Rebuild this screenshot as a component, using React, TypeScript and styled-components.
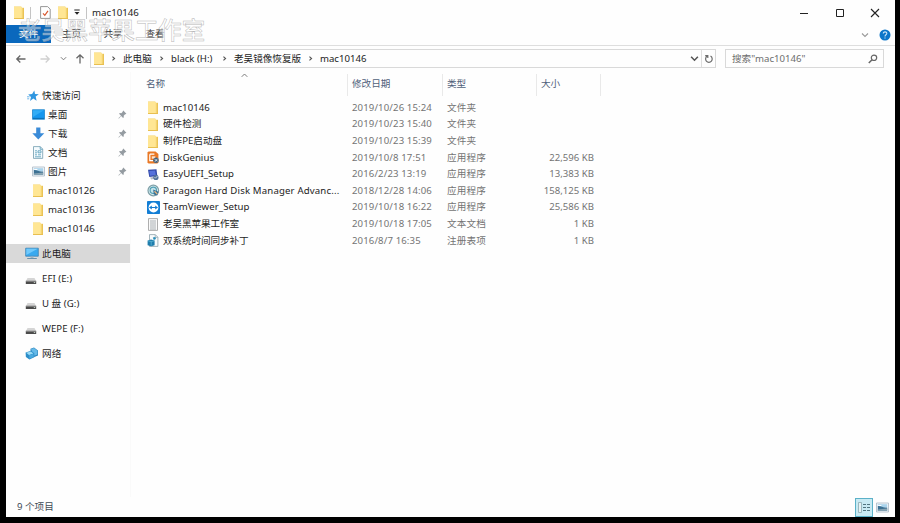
import React from 'react';
import styled, { createGlobalStyle } from 'styled-components';

const Global = createGlobalStyle`
  * { box-sizing: border-box; }
  body {
    margin: 0;
    background: #000;
    font-family: "Noto Sans", "Noto Sans CJK SC", sans-serif;
    font-size: 9.6px;
    line-height: 14px;
    color: #1c1c1c;
    overflow: hidden;
  }
  svg { display: block; flex: none; }
`;

const Screen = styled.div`
  height: 523px;
  padding: 0 5px 6px 6px;
  background: #000;
`;

const Window = styled.div`
  position: relative;
  height: 517px;
  background: #fefefe;
  display: flex;
  flex-direction: column;
  white-space: nowrap;
`;

const TitleBar = styled.header`
  height: 25px;
  display: flex;
  align-items: center;
  padding-left: 7px;
`;

const QuickTools = styled.div`
  display: flex;
  align-items: center;
`;

const Separator = styled.i<{ $l: number; $r: number }>`
  width: 1px;
  height: 12px;
  background: #c4c4c4;
  margin: 0 ${p => p.$r}px 0 ${p => p.$l}px;
`;

const Title = styled.span`
  font-size: 9.7px;
  flex: 1;
`;

const Controls = styled.div`
  display: flex;
  gap: 25.5px;
  padding-right: 15px;
`;

const Ribbon = styled.nav`
  height: 21px;
  display: flex;
  align-items: flex-start;
  border-bottom: 1px solid #dedede;
`;

const Tab = styled.span<{ $file?: boolean; $w: number }>`
  width: ${p => p.$w}px;
  height: 18px;
  line-height: 18px;
  text-align: center;
  background: ${p => (p.$file ? '#0a68bd' : 'transparent')};
  color: ${p => (p.$file ? '#fff' : '#333')};
`;

const RibbonTools = styled.div`
  margin-left: auto;
  display: flex;
  align-items: center;
  gap: 10px;
  height: 20px;
  padding-right: 4px;
`;

const Navigation = styled.div`
  height: 26px;
  display: flex;
  align-items: center;
  padding: 0 11px 1px 9px;
`;

const Arrows = styled.div`
  display: flex;
  align-items: center;
  width: 75px;
`;

const Field = styled.div<{ $w: number }>`
  display: flex;
  align-items: center;
  width: ${p => p.$w}px;
  height: 19px;
  border: 1px solid #d9d9d9;
`;

const Gap = styled.span<{ $w: number }>`
  flex: none;
  width: ${p => p.$w}px;
`;

const Crumbs = styled.div`
  display: flex;
  align-items: center;
  flex: 1;
  padding-left: 5px;
`;

const CrumbMark = styled.span`
  width: 13px;
`;

const Crumb = styled.span<{ $w: number }>`
  width: ${p => p.$w}px;
  color: #222;
`;

const Refresh = styled.div`
  margin-left: 2px;
  width: 14px;
  height: 17px;
  border-left: 1px solid #dedede;
  display: flex;
  align-items: center;
  justify-content: center;
`;

const SearchText = styled.span`
  flex: 1;
  padding-left: 6px;
  color: #6d6d6d;
`;

const Body = styled.div`
  flex: 1;
  display: flex;
`;

const Sidebar = styled.aside`
  width: 124px;
  padding-top: 14px;
`;

const Group = styled.div`
  padding-bottom: 6px;
`;

const Node = styled.div<{ $indent: number; $h: number; $selected?: boolean }>`
  height: ${p => p.$h}px;
  display: flex;
  align-items: center;
  padding: 0 3px 0 ${p => p.$indent}px;
  background: ${p => (p.$selected ? '#d9d9d9' : 'transparent')};
`;

const NodeIcon = styled.span<{ $w: number }>`
  width: ${p => p.$w}px;
`;

const NodeText = styled.span`
  flex: 1;
  letter-spacing: 0.05px;
`;

const Devices = styled.div`
  display: flex;
  flex-direction: column;
  gap: 6.1px;
`;

const Files = styled.main`
  flex: 1;
  border-left: 1px solid #fafafa;
`;

const columns = '206px 95px 94px 64px';

const Header = styled.div`
  position: relative;
  display: grid;
  grid-template-columns: ${columns};
  height: 25px;
  padding: 2px 0 0 11px;
  color: #50617a;
`;

const HeadCell = styled.div`
  height: 22px;
  line-height: 20px;
  border-right: 1px solid #e9e9e9;
  padding-left: 4px;
`;

const SortMark = styled.div`
  position: absolute;
  left: 110px;
  top: 0;
`;

const List = styled.div`
  padding-top: 2.5px;
`;

const FileRow = styled.div`
  display: grid;
  grid-template-columns: ${columns};
  height: 16.62px;
  align-items: center;
  padding-left: 11px;
`;

const NameCell = styled.div`
  display: flex;
  align-items: center;
  padding-left: 5px;
`;

const FileName = styled.span<{ $ls?: number }>`
  padding-left: 4px;
  letter-spacing: ${p => p.$ls || 0}px;
`;

const Info = styled.div<{ $right?: boolean }>`
  padding: 0 7px 0 4px;
  color: #747474;
  letter-spacing: ${p => (p.$right ? 0 : 0.12)}px;
  text-align: ${p => (p.$right ? 'right' : 'left')};
`;

const Status = styled.footer`
  height: 20px;
  display: flex;
  align-items: center;
  justify-content: space-between;
  padding: 0 6px 0 11px;
  color: #3f4a55;
`;

const Views = styled.div`
  display: flex;
  align-items: center;
  gap: 3px;
`;

const ActiveView = styled.div`
  width: 18px;
  height: 19px;
  border: 1px solid #5bb1c8;
  background: #c8eaf3;
  display: flex;
  align-items: center;
  justify-content: center;
`;

const Watermark = styled.div`
  position: absolute;
  left: 12px;
  top: 13px;
  font: 500 23.4px/32px "Noto Sans CJK SC", sans-serif;
  color: rgba(255, 255, 255, 0.45);
  -webkit-text-stroke: 0.5px rgba(165, 165, 165, 0.8);
  pointer-events: none;
`;

const Folder = () => (
  <svg width="12" height="13" viewBox="0 0 12 13">
    <path d="M1 .5h7l1 1.2h2V13H1z" fill="#f4d36f" />
    <path d="M1 .8h7.8V12H1z" fill="#ffe694" />
    <path d="M1 12h10v1H1zM10.2 2h.8v11h-.8z" fill="#e8bf50" />
  </svg>
);

interface ChevronProps { dir?: 'down' | 'up' | 'right'; size?: number; color?: string; sw?: number }

const chevronPaths = {
  down: 'M1 2.5l3 3 3-3',
  up: 'M.8 5.5L4 2.3l3.2 3.2',
  right: 'M2.8 1.8L5.2 4 2.8 6.2',
};

const Chevron = ({ dir = 'down', size = 7, color = '#555', sw = 1.1 }: ChevronProps) => (
  <svg width={size} height={size} viewBox="0 0 8 8" fill="none" stroke={color} strokeWidth={sw}>
    <path d={chevronPaths[dir]} />
  </svg>
);

const Arrow = ({ rotate = 0, color = '#666' }: { rotate?: number; color?: string }) => (
  <svg width="12" height="12" viewBox="0 0 12 12" fill="none" stroke={color} strokeWidth="1.3">
    <path transform={`rotate(${rotate} 6 6)`} d="M10.5 6H1.8M5.3 2.5L1.8 6l3.5 3.5" />
  </svg>
);

const Pin = () => (
  <svg width="9" height="9" viewBox="0 0 9 9">
    <path d="M5.3.6l3.1 3.1-.8.6-.5-.1-1.4 1.6.1 1.5-.7.6-2-2L1 8.4l-.5.1.1-.5 2.4-2.2-1.9-2 .7-.7 1.5.1 1.5-1.4-.1-.6z" fill="#949ba1" />
  </svg>
);

const Drive = () => (
  <svg width="12" height="13" viewBox="0 0 12 13">
    <path d="M2.5 6h7L11 9H1z" fill="#d5d5d5" />
    <path d="M.8 8.8h10.4V12H.8z" fill="#4b4b4b" />
    <path d="M1 9h10v.8H1z" fill="#8a8a8a" />
    <path d="M8.8 10.5h1.4" stroke="#d5e5d8" strokeWidth=".8" />
  </svg>
);

const Picture = () => (
  <svg width="13" height="11" viewBox="0 0 13 11">
    <path d="M.5 1h12v9H.5z" fill="#f3f7fa" stroke="#a9b9c5" strokeWidth=".8" />
    <path d="M1.8 2.2h9.4v3H1.8z" fill="#a9d3ec" />
    <path d="M1.8 4.2c3-.6 5 1.8 9.4 1.2v3.3H1.8z" fill="#3d7193" />
    <path d="M1.8 7.6l9.4-1v2.1H1.8z" fill="#8aa5b3" />
    <path d="M2.2 3h3.2v1H2.2z" fill="#fff" />
  </svg>
);

const Monitor = () => (
  <svg width="14" height="13" viewBox="0 0 14 13">
    <path d="M.7 1.2h12.6v8H.7z" fill="#38a9ef" stroke="#3d83b2" strokeWidth=".8" />
    <path d="M1.3 1.8h11.4L1.3 8z" fill="#70c9fb" />
    <path d="M5.5 9.5h3v1.4h-3z" fill="#9bb3c2" />
    <path d="M2.2 11h9.6v.9H2.2z" fill="#5e8aa6" />
  </svg>
);

const Network = () => (
  <svg width="14" height="13" viewBox="0 0 14 13">
    <path d="M5.5 1.8L9 .4l4 3.2v4.8L9.5 10 5.5 7z" fill="#2f86bd" />
    <path d="M6 2.2L9 1l3.4 2.8v3.8L9 8.8z" fill="#64b9e8" />
    <path d="M.6 5.5l5.5-1.7 3.2 2.4v4L4.4 12.5.9 10z" fill="#2b8dc9" />
    <path d="M1.2 5.8l4.6-1.3L8.4 6.4 4 7.9z" fill="#9adcf7" />
    <path d="M4.2 8.3l4.4-1.5v3.1l-4.2 1.8z" fill="#4aa9de" />
  </svg>
);

const Desktop = () => (
  <svg width="13" height="11" viewBox="0 0 13 11">
    <path d="M.5.7h12v9.6H.5z" fill="#1697ef" stroke="#1680c8" strokeWidth=".7" />
    <path d="M1 1.2h11L1 8z" fill="#32adf6" />
    <path d="M1 9.4h11" stroke="#0965a5" strokeWidth=".8" />
  </svg>
);

const Download = () => (
  <svg width="13" height="13" viewBox="0 0 13 13">
    <path d="M4.2.6h4.2v5.6h3.9l-6 6.2-6-6.2h3.9z" fill="#3a8bd8" />
  </svg>
);

const Doc = () => (
  <svg width="12" height="13" viewBox="0 0 12 13">
    <path d="M1.5.6h6.8l2.4 2.5v9.3H1.5z" fill="#f5fbfe" stroke="#719caf" strokeWidth=".8" />
    <path d="M8.2.8v2.5h2.4M3 4.8h2M3 6.8h2M3 8.8h2M3 10.8h6M6 4.8h3v2H6zM6 8.8h3" fill="none" stroke="#4f98b6" strokeWidth=".8" />
  </svg>
);

const Star = () => (
  <svg width="12" height="12" viewBox="0 0 12 12">
    <path d="M7.3.4l.7 3.5 3.8.3-3.1 2.3.9 4.3-3.3-2.2L3 10.9l1-3.8L1.2 4.6l3.9-.5z" fill="#2f96e0" />
    <path d="M0 6.8h2.6M.2 8.8h2" stroke="#5caee8" strokeWidth=".9" />
  </svg>
);

const icons: Record<string, React.ReactNode> = {
  folder: <Folder />,
  disk: (
    <svg width="12" height="13" viewBox="0 0 12 13">
      <path d="M1.5.5h7L11.4 3v8.5l-1 1H1.5l-1-1v-10z" fill="#e97825" />
      <path d="M2.8 3.2h4.6M2.8 3.2v6.5h3.4" fill="none" stroke="#fff" strokeWidth="1.2" />
      <path d="M4.8 5.3h3.6v2.4H4.8z" fill="#fde3cc" />
      <circle cx="9" cy="9.2" r="2.7" fill="#42617d" />
      <path d="M7.5 8.2l3 2M10.3 7.8l-2.4 3" stroke="#dde8ef" strokeWidth=".8" />
    </svg>
  ),
  uefi: (
    <svg width="12" height="13" viewBox="0 0 12 13">
      <path d="M1 1.8l8.5-.6.8 6.8L2.3 9z" fill="#3047a7" />
      <path d="M2.2 3l6-.5.6 4.4-5.8.8z" fill="#5672dc" />
      <path d="M3 9.4l5-.7.6 1.8-4.4 1z" fill="#b4bac6" />
      <circle cx="8.9" cy="9.4" r="2.6" fill="#52719a" />
      <path d="M7.5 9.2l1 1 2-2.3" fill="none" stroke="#e1e7ec" strokeWidth=".8" />
    </svg>
  ),
  paragon: (
    <svg width="13" height="13" viewBox="0 0 13 13">
      <circle cx="6.3" cy="6.5" r="5.3" fill="#d9ecef" stroke="#7d9ea6" strokeWidth="1.2" />
      <circle cx="6.3" cy="6.3" r="3.2" fill="#c5e3ea" stroke="#4f9fb5" strokeWidth="1.1" />
      <path d="M6.2 5.4l5.2 2.4-1.2 3.6-3.4-.8z" fill="#316d98" />
      <path d="M7.5 7.2l2.7 2.8" stroke="#e2b57e" strokeWidth="1.3" />
    </svg>
  ),
  team: (
    <svg width="13" height="13" viewBox="0 0 13 13">
      <rect width="13" height="13" rx=".8" fill="#137ed5" />
      <circle cx="6.5" cy="6.5" r="4.9" fill="#fff" />
      <path d="M2 6.5l2.8-2v1.4h3.4V4.5l2.8 2-2.8 2V7.1H4.8v1.4z" fill="#147bd1" />
    </svg>
  ),
  text: (
    <svg width="12" height="13" viewBox="0 0 12 13">
      <path d="M1.5.6h9v11.8h-9z" fill="#fafafa" stroke="#999" strokeWidth=".8" />
      <path d="M3 3h6M3 5h6M3 7h6M3 9h6M3 11h6" stroke="#949da1" strokeWidth=".8" />
    </svg>
  ),
  registry: (
    <svg width="12" height="13" viewBox="0 0 12 13">
      <path d="M2.5.6h5.8l2.6 2.6v9.2H2.5z" fill="#f8fbfc" stroke="#8ea1aa" strokeWidth=".8" />
      <path d="M8.2.8v2.6h2.6" fill="none" stroke="#8ea1aa" strokeWidth=".7" />
      <path d="M.6 6.4L4 5.6l3.6.8v4.8L4.2 12.3.6 11.2z" fill="#1f7dac" />
      <path d="M1 6.8l3.2.8v4M4.2 7.6l3-.8" fill="none" stroke="#5fb8d6" strokeWidth=".8" />
      <path d="M5.8 3.6l2.4-.5.8 2-2.2.8z" fill="#2a8dba" />
    </svg>
  ),
};

interface FileEntry { icon: string; name: string; date: string; type: string; size?: string; ls?: number }

const files: FileEntry[] = [
  { icon: 'folder', name: 'mac10146', date: '2019/10/26 15:24', type: '文件夹', ls: 0.05 },
  { icon: 'folder', name: '硬件检测', date: '2019/10/23 15:40', type: '文件夹' },
  { icon: 'folder', name: '制作PE启动盘', date: '2019/10/23 15:39', type: '文件夹' },
  { icon: 'disk', name: 'DiskGenius', date: '2019/10/8 17:51', type: '应用程序', size: '22,596 KB', ls: 0.05 },
  { icon: 'uefi', name: 'EasyUEFI_Setup', date: '2016/2/23 13:19', type: '应用程序', size: '13,383 KB' },
  { icon: 'paragon', name: 'Paragon Hard Disk Manager Advanc...', date: '2018/12/28 14:06', type: '应用程序', size: '158,125 KB', ls: 0.17 },
  { icon: 'team', name: 'TeamViewer_Setup', date: '2019/10/18 16:22', type: '应用程序', size: '25,586 KB', ls: 0.1 },
  { icon: 'text', name: '老吴黑苹果工作室', date: '2019/10/18 17:05', type: '文本文档', size: '1 KB', ls: -0.1 },
  { icon: 'registry', name: '双系统时间同步补丁', date: '2016/8/7 16:35', type: '注册表项', size: '1 KB', ls: -0.1 },
];

const shortcuts = [
  { name: '桌面', icon: <Desktop />, pin: true },
  { name: '下载', icon: <Download />, pin: true },
  { name: '文档', icon: <Doc />, pin: true },
  { name: '图片', icon: <Picture />, pin: true },
  { name: 'mac10126', icon: <Folder />, pin: false },
  { name: 'mac10136', icon: <Folder />, pin: false },
  { name: 'mac10146', icon: <Folder />, pin: false },
];

const devices = [
  { name: '此电脑', icon: <Monitor />, selected: true },
  { name: 'EFI (E:)', icon: <Drive /> },
  { name: 'U 盘 (G:)', icon: <Drive /> },
  { name: 'WEPE (F:)', icon: <Drive /> },
  { name: '网络', icon: <Network /> },
];

const crumbs = [
  { name: '此电脑', w: 35 },
  { name: 'black (H:)', w: 50 },
  { name: '老吴镜像恢复版', w: 73 },
  { name: 'mac10146', w: 60 },
];

export default function App() {
  return (
    <Screen>
      <Global />
      <Window>
        <TitleBar>
          <QuickTools>
            <Folder />
            <Separator $l={5} $r={9} />
            <svg width="11" height="13" viewBox="0 0 11 13">
              <path d="M.6.6h7l2.6 2.5v9.3H.6z" fill="#fff" stroke="#8b8b8b" strokeWidth=".9" />
              <path d="M3 7.4l1.8 2 3.2-4.6" fill="none" stroke="#d8582f" strokeWidth="1.2" />
            </svg>
            <Gap $w={6} />
            <Folder />
            <Gap $w={5} />
            <svg width="6" height="7" viewBox="0 0 6 7">
              <path d="M.3 1h5.4" stroke="#222" />
              <path d="M.5 3h5L3 5.8z" fill="#222" />
            </svg>
            <Separator $l={6} $r={5} />
          </QuickTools>
          <Title>mac10146</Title>
          <Controls>
            <svg width="10" height="10"><path d="M1 5.5h8" stroke="#222" /></svg>
            <svg width="10" height="10"><path d="M1.5 1.5h7v7h-7z" fill="none" stroke="#222" /></svg>
            <svg width="10" height="10"><path d="M1 1l8 8M9 1L1 9" stroke="#222" strokeWidth="1.1" /></svg>
          </Controls>
        </TitleBar>
        <Ribbon>
          <Tab $file $w={45}>文件</Tab>
          <Tab $w={41}>主页</Tab>
          <Tab $w={42}>共享</Tab>
          <Tab $w={42}>查看</Tab>
          <RibbonTools>
            <Chevron size={8} color="#999" />
            <svg width="12" height="12" viewBox="0 0 12 12">
              <circle cx="6" cy="6" r="5.5" fill="#0c75c9" />
              <path d="M4.3 4.5c0-2.3 3.6-2.1 3.5 0C7.7 5.8 6 5.7 6 7.4M6 8.4v1.2" fill="none" stroke="#cfe6f8" strokeWidth="1.1" />
            </svg>
          </RibbonTools>
        </Ribbon>
        <Navigation>
          <Arrows>
            <Arrow />
            <Gap $w={12} />
            <Arrow rotate={180} color="#d0d0d0" />
            <Gap $w={9} />
            <Chevron size={7} color="#777" />
            <Gap $w={7} />
            <Arrow rotate={90} />
          </Arrows>
          <Field $w={626}>
            <Gap $w={2} />
            <Folder />
            <Crumbs>
              {crumbs.map(c => (
                <React.Fragment key={c.name}>
                  <CrumbMark><Chevron dir="right" size={7} sw={1.3} /></CrumbMark>
                  <Crumb $w={c.w}>{c.name}</Crumb>
                </React.Fragment>
              ))}
            </Crumbs>
            <Chevron size={9} sw={1.4} />
            <Refresh>
              <svg width="10" height="10" viewBox="0 0 10 10" fill="none" stroke="#6c6c6c" strokeWidth="1.2">
                <path d="M6.5 2.1a3.3 3.3 0 1 1-3.2 0M3.8 4V1.6H1.2" />
              </svg>
            </Refresh>
          </Field>
          <Gap $w={9} />
          <Field $w={159}>
            <SearchText>搜索"mac10146"</SearchText>
            <svg width="10" height="10" viewBox="0 0 10 10" fill="none" stroke="#666">
              <circle cx="6" cy="3.8" r="2.7" strokeWidth="1.2" />
              <path d="M4 5.8L.8 9" strokeWidth="1.5" />
            </svg>
            <Gap $w={5} />
          </Field>
        </Navigation>
        <Body>
          <Sidebar>
            <Group>
              <Node $indent={21} $h={19}>
                <NodeIcon $w={15}><Star /></NodeIcon>
                <NodeText>快速访问</NodeText>
              </Node>
              {shortcuts.map(n => (
                <Node key={n.name} $indent={26} $h={19}>
                  <NodeIcon $w={16}>{n.icon}</NodeIcon>
                  <NodeText>{n.name}</NodeText>
                  {n.pin && <Pin />}
                </Node>
              ))}
            </Group>
            <Devices>
              {devices.map(n => (
                <Node key={n.name} $indent={19} $h={19} $selected={n.selected}>
                  <NodeIcon $w={17}>{n.icon}</NodeIcon>
                  <NodeText>{n.name}</NodeText>
                </Node>
              ))}
            </Devices>
          </Sidebar>
          <Files>
            <Header>
              <HeadCell>名称</HeadCell>
              <HeadCell>修改日期</HeadCell>
              <HeadCell>类型</HeadCell>
              <HeadCell>大小</HeadCell>
              <SortMark><Chevron dir="up" size={7} color="#777" /></SortMark>
            </Header>
            <List>
              {files.map(f => (
                <FileRow key={f.name}>
                  <NameCell>
                    <NodeIcon $w={12}>{icons[f.icon]}</NodeIcon>
                    <FileName $ls={f.ls}>{f.name}</FileName>
                  </NameCell>
                  <Info>{f.date}</Info>
                  <Info>{f.type}</Info>
                  <Info $right>{f.size}</Info>
                </FileRow>
              ))}
            </List>
          </Files>
        </Body>
        <Status>
          <span>9 个项目</span>
          <Views>
            <ActiveView>
              <svg width="14" height="13" viewBox="0 0 14 13">
                <path d="M1.5 1.5h3v10h-3z" fill="#e6f2f5" stroke="#8baab0" strokeWidth=".8" />
                <path d="M6 3.5h3M10 3.5h3M6 6.5h3M10 6.5h3M6 9.5h3M10 9.5h3" stroke="#50747f" />
              </svg>
            </ActiveView>
            <Picture />
          </Views>
        </Status>
        <Watermark>老吴黑苹果工作室</Watermark>
      </Window>
    </Screen>
  );
}
